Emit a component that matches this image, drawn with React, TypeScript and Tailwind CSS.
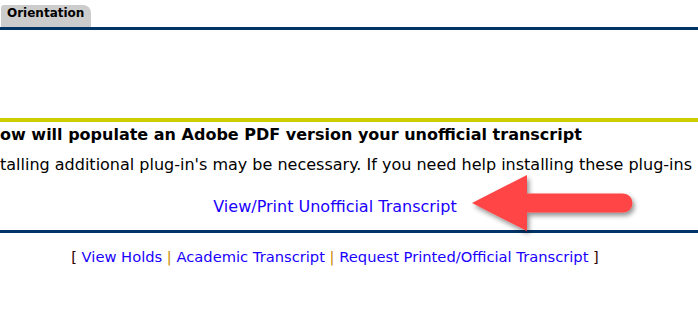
export default function App() {
  return (
    <div
      className="relative w-[698px] h-[313px] overflow-hidden bg-white text-black"
      style={{ fontFamily: '"DejaVu Sans", Verdana, sans-serif' }}
    >
      {/* tab strip */}
      <div className="h-[27px] pt-[5px]">
        <div className="ml-[1px] h-[22px] w-[90px] rounded-tl-[3px] rounded-tr-[8px] bg-[#cccccc] pl-[6px] text-[12px] font-bold leading-[16px]">
          Orientation
        </div>
      </div>
      <div className="h-[3px] bg-[#003366]" />

      <div className="h-[88px]" />
      <div className="h-[4px] bg-[#cccc00]" />

      <div className="whitespace-nowrap pt-[3px] text-[16px] font-bold leading-[20px]">
        ow will populate an Adobe PDF version your unofficial transcript
      </div>
      <div className="whitespace-nowrap pt-[10px] text-[16px] leading-[20px]">
        talling additional plug-in's may be necessary. If you need help installing these plug-ins
      </div>
      <div className="mr-[28px] pt-[22px] text-center text-[16px] leading-[20px]">
        <a href="#" className="text-[#1a00ff]">
          View/Print Unofficial Transcript
        </a>
      </div>
      <div className="h-[13px]" />
      <div className="h-[3px] bg-[#003366]" />

      <div className="mr-[28px] pt-[15px] text-center text-[14.7px] leading-[18px] text-[#330000]">
        [{' '}
        <a href="#" className="text-[#1a00ff]">View Holds</a>{' '}
        <span className="text-[#c98a00]">|</span>{' '}
        <a href="#" className="text-[#1a00ff]">Academic Transcript</a>{' '}
        <span className="text-[#c98a00]">|</span>{' '}
        <a href="#" className="text-[#1a00ff]">Request Printed/Official Transcript</a> ]
      </div>

      {/* red arrow annotation */}
      <svg
        className="absolute left-[466px] top-[170px]"
        width="180"
        height="70"
        viewBox="0 0 180 70"
      >
        <defs>
          <filter id="sh" x="-20%" y="-30%" width="140%" height="170%">
            <feDropShadow dx="2" dy="3" stdDeviation="2.5" floodColor="#000" floodOpacity="0.45" />
          </filter>
        </defs>
        <path
          d="M6 33 L61 5 L61 23.5 L157 23.5 A9.5 9.5 0 0 1 157 42.5 L61 42.5 L61 61 Z"
          fill="#ff4444"
          filter="url(#sh)"
        />
      </svg>
    </div>
  )
}
